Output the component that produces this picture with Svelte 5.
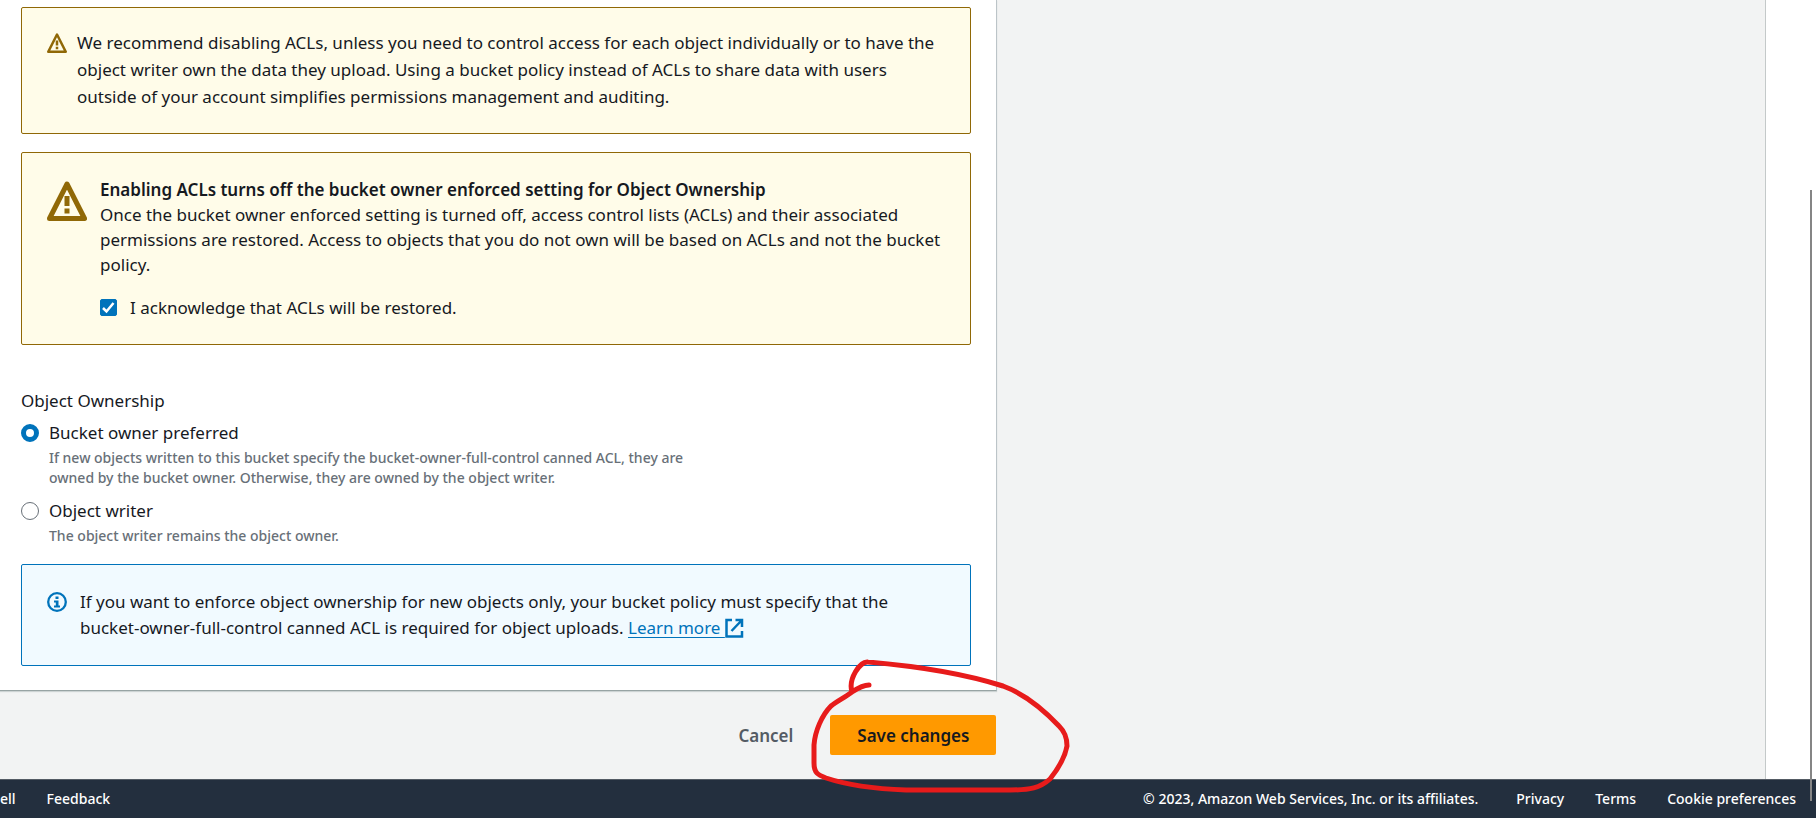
<script lang="ts">
  let acknowledged = $state(true);
  let ownership = $state('preferred');

  const choices = [
    {
      value: 'preferred',
      label: 'Bucket owner preferred',
      hint: 'If new objects written to this bucket specify the bucket-owner-full-control canned ACL, they are owned by the bucket owner. Otherwise, they are owned by the object writer.'
    },
    {
      value: 'writer',
      label: 'Object writer',
      hint: 'The object writer remains the object owner.'
    }
  ];
</script>

{#snippet warning(size: number)}
  <svg class="icon" width={size} height={size} viewBox="0 0 40 40" aria-hidden="true">
    <path d="M20 3 L37.500 37.500 H2.500 Z" fill="none" stroke="#906806" stroke-width="5" stroke-linejoin="round" />
    <path d="M17.500 15h5v10h-5z M17.500 27.500h5v5h-5z" fill="#906806" />
  </svg>
{/snippet}

<div class="page">
  <div class="body">
    <main>
      <form class="panel">
        <section class="alert warn compact">
          {@render warning(20)}
          <p>We recommend disabling ACLs, unless you need to control access for each object individually or to have the object writer own the data they upload. Using a bucket policy instead of ACLs to share data with users outside of your account simplifies permissions management and auditing.</p>
        </section>

        <section class="alert warn large">
          {@render warning(40)}
          <div>
            <h2>Enabling ACLs turns off the bucket owner enforced setting for Object Ownership</h2>
            <p>Once the bucket owner enforced setting is turned off, access control lists (ACLs) and their associated permissions are restored. Access to objects that you do not own will be based on ACLs and not the bucket policy.</p>
            <label class="check">
              <input type="checkbox" bind:checked={acknowledged} />
              <span>I acknowledge that ACLs will be restored.</span>
            </label>
          </div>
        </section>

        <fieldset>
          <legend>Object Ownership</legend>
          {#each choices as c}
            <div class="choice">
              <input type="radio" name="ownership" id={c.value} value={c.value} bind:group={ownership} />
              <div>
                <label for={c.value}>{c.label}</label>
                <p>{c.hint}</p>
              </div>
            </div>
          {/each}
        </fieldset>

        <section class="alert info">
          <svg class="icon" width="20" height="20" viewBox="0 0 20 20" aria-hidden="true">
            <circle cx="10" cy="10" r="8.800" fill="none" stroke="#0073bb" stroke-width="2.300" />
            <path d="M8.500 4.500h3v2.500h-3z M7 8.500h4.500v5H13v2H7v-2h1.800v-3H7z" fill="#0073bb" />
          </svg>
          <p>If you want to enforce object ownership for new objects only, your bucket policy must specify that the <span class="keep">bucket-owner-full-control</span> canned ACL is required for object uploads. <a href="#learn">Learn more&nbsp;<svg width="19" height="20" viewBox="0 0 19 20" aria-hidden="true"><path d="M7 2H1.500v16.500H17V13 M10.500 2H17v7 M17 2 6.500 13" fill="none" stroke="#0073bb" stroke-width="2.500" /></svg></a></p>
        </section>
      </form>

      <div class="actions">
        <button type="button" class="cancel">Cancel</button>
        <div class="marked">
          <button type="button" class="save">Save changes</button>
          <svg class="mark" width="290" height="160" viewBox="0 0 290 160" aria-hidden="true">
            <path d="M69 36 C63 36 58 39 52 43 C44 49 37 52 31 57 C22 66 15 82 14 96 V114 C14 124 18 126 26 129 C50 137 80 140 106 141 H210 C230 141 240 139 250 130 C258 120 265 108 267 97 C267 87 264 82 259 77 C241 58 222 44 203 37 C165 25 115 17 68 13 C60 12 48 30 52 43" />
          </svg>
        </div>
      </div>
    </main>
    <aside></aside>
  </div>

  <footer>
    <nav>
      <a href="#shell">ell</a>
      <a href="#feedback">Feedback</a>
    </nav>
    <div class="legal">
      <span>© 2023, Amazon Web Services, Inc. or its affiliates.</span>
      <a href="#privacy">Privacy</a>
      <a href="#terms">Terms</a>
      <a href="#cookies">Cookie preferences</a>
    </div>
  </footer>
  <div class="thumb"></div>
</div>

<style>
  .page {
    position: relative;
    display: flex;
    flex-direction: column;
    min-height: 100vh;
    overflow: hidden;
    background: #fff;
    color: #16191f;
    font: 17px/25px "Noto Sans", sans-serif;
  }
  p, h2, fieldset, legend { margin: 0; padding: 0; border: 0; }
  .body {
    flex: 1;
    display: grid;
    grid-template-columns: 998fr 768fr;
    margin-right: 50px;
    background: #f2f3f3;
    border-right: 1px solid #c4c9c9;
    box-sizing: border-box;
  }
  main { display: flex; flex-direction: column; }
  .panel {
    padding: 7px 25px 24px 21px;
    background: #fff;
    border-right: 1px solid #bcc4c8;
    border-bottom: 1px solid #97a3a3;
    box-shadow: 0 1px 1px #cdd3d3;
  }
  .alert {
    display: flex;
    border: 1px solid;
    border-radius: 2px;
    padding: 24px 25px;
  }
  .icon { flex: none; }
  .warn { background: #fffce9; border-color: #906806; }
  .compact { padding-top: 21px; padding-bottom: 23px; gap: 10px; line-height: 27px; }
  .compact .icon { margin-top: 4px; }
  .large { margin-top: 18px; gap: 13px; }
  .large .icon { margin-top: 4px; }
  .info { margin-top: 18px; gap: 13px; line-height: 26px; background: #f1faff; border-color: #0073bb; }
  .info .icon { margin-top: 3px; }
  .keep { white-space: nowrap; }
  h2 { font-size: 17px; line-height: 25px; font-weight: 600; }
  .check { display: flex; align-items: center; gap: 13px; margin-top: 18px; }
  input { appearance: none; flex: none; margin: 0; box-sizing: border-box; border: 1px solid #687078; background: #fff; }
  input[type="checkbox"] { width: 17px; height: 17px; border-radius: 2px; }
  input[type="checkbox"]:checked {
    border-color: #0073bb;
    background: #0073bb url("data:image/svg+xml,%3Csvg xmlns='http://www.w3.org/2000/svg' viewBox='0 0 15 15'%3E%3Cpath d='M2 8l3.500 3.500L12.500 3' fill='none' stroke='white' stroke-width='2.500'/%3E%3C/svg%3E");
  }
  input[type="radio"] { width: 18px; height: 18px; margin-top: 4px; border-radius: 50%; }
  input[type="radio"]:checked { border: 5px solid #0073bb; }
  fieldset { margin-top: 43px; }
  .choice { display: flex; gap: 10px; margin-top: 7px; }
  .choice + .choice { margin-top: 10px; }
  .choice label { display: block; }
  .choice p { max-width: 660px; margin-top: 3px; font: 500 14px/20px "Noto Sans", sans-serif; color: #687078; }
  .info a { color: #0073bb; text-underline-offset: 3px; }
  .info a svg { vertical-align: -4px; }
  .actions { display: flex; justify-content: flex-end; align-items: center; gap: 10px; padding: 24px 1px 23px 0; }
  button { height: 40px; border: 0; border-radius: 2px; padding: 0 27px; font: 600 17px/25px "Noto Sans", sans-serif; }
  .cancel { background: none; color: #545b64; }
  .save { background: #ff9900; color: #16191f; }
  .marked { position: relative; }
  .mark { position: absolute; right: -94px; top: -66px; z-index: 2; pointer-events: none; }
  .mark path { fill: none; stroke: #e71b1b; stroke-width: 5; stroke-linecap: round; stroke-linejoin: round; }
  footer {
    display: flex;
    justify-content: space-between;
    height: 38px;
    border-top: 1px solid #545b64;
    padding-right: 20px;
    background: #232f3e;
    color: #fff;
    font: 500 14px/38px "Noto Sans", sans-serif;
    white-space: nowrap;
  }
  footer a { color: inherit; text-decoration: none; }
  nav, .legal { display: flex; gap: 31px; }
  .legal span { margin-right: 7px; }
  .thumb { position: absolute; right: 4px; top: 190px; bottom: 17px; width: 2px; background: #858585; }
</style>
